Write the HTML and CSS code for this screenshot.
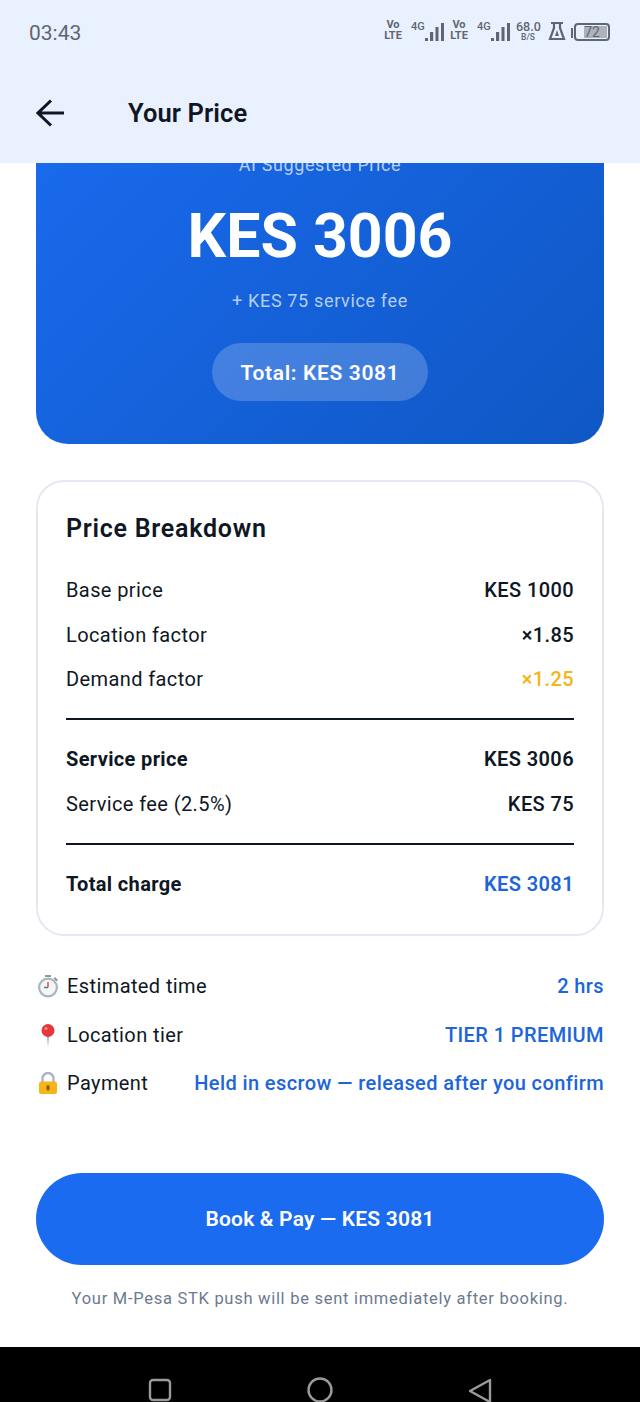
FILE: index.html
```html
<!DOCTYPE html>
<html lang="en">
<head>
  <meta charset="UTF-8">
  <meta name="viewport" content="width=device-width, initial-scale=1.0">
  <title>Your Price</title>
  <link rel="stylesheet" href="styles.css">
</head>
<body>

  <header class="top">
    <div class="status">
      <span class="clock">03:43</span>
      <div class="indicators">
        <span class="volte">Vo<br>LTE</span>
        <span class="net">4G</span>
        <svg class="bars" width="19" height="18" viewBox="0 0 19 18"><path d="M0 15h3v3H0zM5 9h3.200v9H5zM10.500 4h3v14h-3zM16 0h3v18h-3z" fill="#5f6670"/></svg>
        <span class="volte">Vo<br>LTE</span>
        <span class="net">4G</span>
        <svg class="bars" width="19" height="18" viewBox="0 0 19 18"><path d="M0 15h3v3H0zM5 9h3.200v9H5zM10.500 4h3v14h-3zM16 0h3v18h-3z" fill="#5f6670"/></svg>
        <span class="speed">68.0<small>B/S</small></span>
        <svg class="flask" width="18" height="20" viewBox="0 0 18 20"><path d="M3 2h12M6 2v5L2 18h14L12 7V2" fill="none" stroke="#5f6670" stroke-width="2.200"/><path d="M9 9l-2 6h4z" fill="#5f6670"/></svg>
        <span class="nub"></span>
        <span class="battery"><span class="battery-fill"></span><span class="battery-num">72</span></span>
      </div>
    </div>
    <div class="appbar">
      <svg class="back" width="30" height="28" viewBox="0 0 30 28"><path d="M28 14H2M15 1.500L2 14l13 12.500" fill="none" stroke="#0f1724" stroke-width="3"/></svg>
      <h1>Your Price</h1>
    </div>
  </header>

  <main class="scroll">
    <section class="hero">
      <p class="hero-label">AI Suggested Price</p>
      <p class="hero-price">KES 3006</p>
      <p class="hero-fee">+ KES 75 service fee</p>
      <span class="hero-total">Total: KES 3081</span>
    </section>

    <section class="card">
      <h2>Price Breakdown</h2>
      <div class="rows">
        <div class="row"><span>Base price</span><b>KES 1000</b></div>
        <div class="row"><span>Location factor</span><b>×1.85</b></div>
        <div class="row"><span>Demand factor</span><b class="amber">×1.25</b></div>
      </div>
      <hr class="rule-one">
      <div class="rows">
        <div class="row"><strong>Service price</strong><b class="heavy">KES 3006</b></div>
        <div class="row"><span>Service fee (2.5%)</span><b>KES 75</b></div>
      </div>
      <hr class="rule-two">
      <div class="row"><strong>Total charge</strong><b class="heavy blue">KES 3081</b></div>
    </section>

    <section class="info">
      <div class="info-row">
        <span class="info-name">
          <svg class="emoji" width="24" height="24" viewBox="0 0 24 24">
            <path d="M9 1h6v2H9zM19 3l3 3-1.500 1.500-3-3z" fill="#8b98a5"/>
            <circle cx="12" cy="13.500" r="10" fill="#a9b5bf"/>
            <circle cx="12" cy="13.500" r="7.800" fill="#f3f5f7"/>
            <path d="M12 8v5.500" stroke="#d9534f" stroke-width="1.500"/>
            <path d="M8 13.500h4" stroke="#67757f" stroke-width="1.500"/>
          </svg>
          Estimated time
        </span>
        <b>2 hrs</b>
      </div>
      <div class="info-row">
        <span class="info-name">
          <svg class="emoji" width="24" height="24" viewBox="0 0 24 24">
            <path d="M11 12h2l-1 12z" fill="#8ea3b3"/>
            <circle cx="12" cy="7.500" r="6.500" fill="#e5383b"/>
            <circle cx="10" cy="5.500" r="1.600" fill="#f28b8d"/>
          </svg>
          Location tier
        </span>
        <b>TIER 1 PREMIUM</b>
      </div>
      <div class="info-row">
        <span class="info-name">
          <svg class="emoji" width="24" height="24" viewBox="0 0 24 24">
            <path d="M6.500 11V7.500a5.500 5.500 0 0 1 11 0V11" fill="none" stroke="#a9b5bf" stroke-width="2.400"/>
            <rect x="3" y="10.500" width="18" height="12.500" rx="2.500" fill="#f4b41a"/>
            <rect x="10.500" y="14" width="3" height="5.500" rx="1.500" fill="#8a5a10"/>
          </svg>
          Payment
        </span>
        <b>Held in escrow — released after you confirm</b>
      </div>
    </section>

    <button class="pay">Book &amp; Pay — KES 3081</button>
    <p class="note">Your M-Pesa STK push will be sent immediately after booking.</p>
  </main>

  <nav class="sysnav">
    <svg width="24" height="24" viewBox="0 0 24 24"><rect x="2" y="2" width="20" height="20" rx="3" fill="none" stroke="#9a9a9a" stroke-width="2.400"/></svg>
    <svg class="home" width="26" height="26" viewBox="0 0 26 26"><circle cx="13" cy="13" r="11.500" fill="none" stroke="#9a9a9a" stroke-width="2.400"/></svg>
    <svg width="24" height="26" viewBox="0 0 24 26"><path d="M22 2v22L2 13z" fill="none" stroke="#9a9a9a" stroke-width="2.400" stroke-linejoin="round"/></svg>
  </nav>

</body>
</html>
```

FILE: styles.css
```css
* {
  box-sizing: border-box;
}

body {
  margin: 0;
  width: 640px;
  height: 1402px;
  overflow: hidden;
  display: flex;
  flex-direction: column;
  font-family: Roboto, "Liberation Sans", sans-serif;
  background: #fff;
  color: #0f1724;
}

.top {
  height: 163px;
  flex: none;
  background: #eaf1fe;
}

.status {
  height: 66px;
  display: flex;
  justify-content: space-between;
  align-items: flex-start;
  padding: 21px 30px 0 29px;
  color: #5f6670;
}

.clock {
  font-size: 21px;
  line-height: 25px;
}

.indicators {
  display: flex;
  align-items: flex-end;
  height: 21px;
  margin-top: -1px;
}

.volte {
  width: 18px;
  font-size: 11px;
  font-weight: 700;
  line-height: 10.500px;
  text-align: center;
  margin-right: 9px;
}

.net {
  width: 14px;
  align-self: flex-start;
  margin-top: 1px;
  font-size: 11px;
  font-weight: 500;
  line-height: 12px;
}

.bars {
  margin-right: 6px;
}

.speed {
  width: 24px;
  font-size: 12.500px;
  font-weight: 500;
  line-height: 12px;
  text-align: center;
  margin: 0 8px -1px 0;
}

.speed small {
  display: block;
  font-size: 8.500px;
  line-height: 9px;
}

.flask {
  margin-right: 5px;
}

.nub {
  width: 2px;
  height: 10px;
  background: #5f6670;
  margin: 0 1px 3px 0;
}

.battery {
  width: 36px;
  height: 18px;
  border: 2px solid #5f6670;
  border-radius: 4px;
  position: relative;
  display: block;
}

.battery-fill {
  position: absolute;
  top: 1px;
  bottom: 1px;
  right: 1px;
  width: 23px;
  background: #aeb3bb;
}

.battery-num {
  position: absolute;
  inset: 0;
  font-size: 14px;
  line-height: 14px;
  text-align: center;
}

.appbar {
  height: 97px;
  display: flex;
  align-items: center;
  padding: 0 0 4px 36px;
}

.appbar h1 {
  margin: 0 0 0 62px;
  font-size: 25.500px;
  font-weight: 600;
  letter-spacing: 0.1px;
}

.scroll {
  height: 1184px;
  flex: none;
  overflow: hidden;
  padding: 0 36px;
}

.hero {
  height: 341px;
  margin-top: -60px;
  padding-top: 50px;
  border-radius: 0 0 32px 32px;
  background: linear-gradient(135deg, #1a6bef, #0f57c4);
  color: #fff;
  text-align: center;
}

.hero p {
  margin: 0;
}

.hero-label {
  font-size: 18px;
  line-height: 24px;
  letter-spacing: 0.6px;
  color: rgba(255, 255, 255, 0.7);
}

.hero .hero-price {
  margin-top: 24px;
  font-size: 60.800px;
  line-height: 72px;
  font-weight: 700;
}

.hero .hero-fee {
  margin-top: 16px;
  font-size: 18px;
  line-height: 24px;
  letter-spacing: 0.65px;
  color: rgba(255, 255, 255, 0.7);
}

.hero-total {
  display: inline-block;
  margin-top: 30px;
  padding: 1px 28.500px 0;
  height: 58px;
  line-height: 58px;
  border-radius: 29px;
  background: rgba(255, 255, 255, 0.2);
  font-size: 21px;
  font-weight: 600;
  letter-spacing: 0.65px;
}

.card {
  height: 456px;
  margin-top: 36px;
  padding: 29px 28px 0;
  border: 2px solid #e4e8f0;
  border-radius: 28px;
}

.card h2 {
  margin: 0 0 29px;
  font-size: 25px;
  line-height: 36px;
  font-weight: 600;
  letter-spacing: 0.75px;
}

.rows {
  display: flex;
  flex-direction: column;
  gap: 16.500px;
}

.row {
  display: flex;
  justify-content: space-between;
  align-items: center;
  height: 28px;
  font-size: 20px;
  letter-spacing: 0.4px;
}

.row strong {
  font-weight: 700;
  letter-spacing: 0.35px;
}

.row b {
  font-weight: 500;
}

.row b.heavy {
  font-weight: 600;
}

.rule-one,
.rule-two {
  border: 0;
  border-top: 2px solid #0f1724;
}

.rule-one {
  margin: 25px 0 25px;
}

.rule-two {
  margin: 25px 0 25px;
}

.amber {
  color: #f4b41a;
}

.blue {
  color: #1d65d8;
}

.info {
  margin-top: 36px;
  display: flex;
  flex-direction: column;
  gap: 20.500px;
}

.info-row {
  display: flex;
  justify-content: space-between;
  align-items: center;
  height: 28px;
  font-size: 20px;
  letter-spacing: 0.4px;
}

.info-name {
  display: flex;
  align-items: center;
  gap: 7px;
  white-space: nowrap;
}

.info-row b {
  font-weight: 500;
  color: #1d65d8;
  white-space: nowrap;
}

.pay {
  display: block;
  width: 100%;
  height: 92px;
  margin-top: 76px;
  border: 0;
  border-radius: 46px;
  background: #1a6bef;
  color: #fff;
  font: 600 21px Roboto, "Liberation Sans", sans-serif;
  letter-spacing: 0.2px;
}

.note {
  margin: 23px 0 0;
  text-align: center;
  font-size: 16.500px;
  line-height: 22px;
  letter-spacing: 0.72px;
  color: #6b7a90;
}

.sysnav {
  height: 55px;
  flex: none;
  background: #000;
  display: flex;
  justify-content: space-between;
  align-items: flex-start;
  padding: 31px 148px 0 148px;
}

.home {
  margin-top: -1px;
}
```
